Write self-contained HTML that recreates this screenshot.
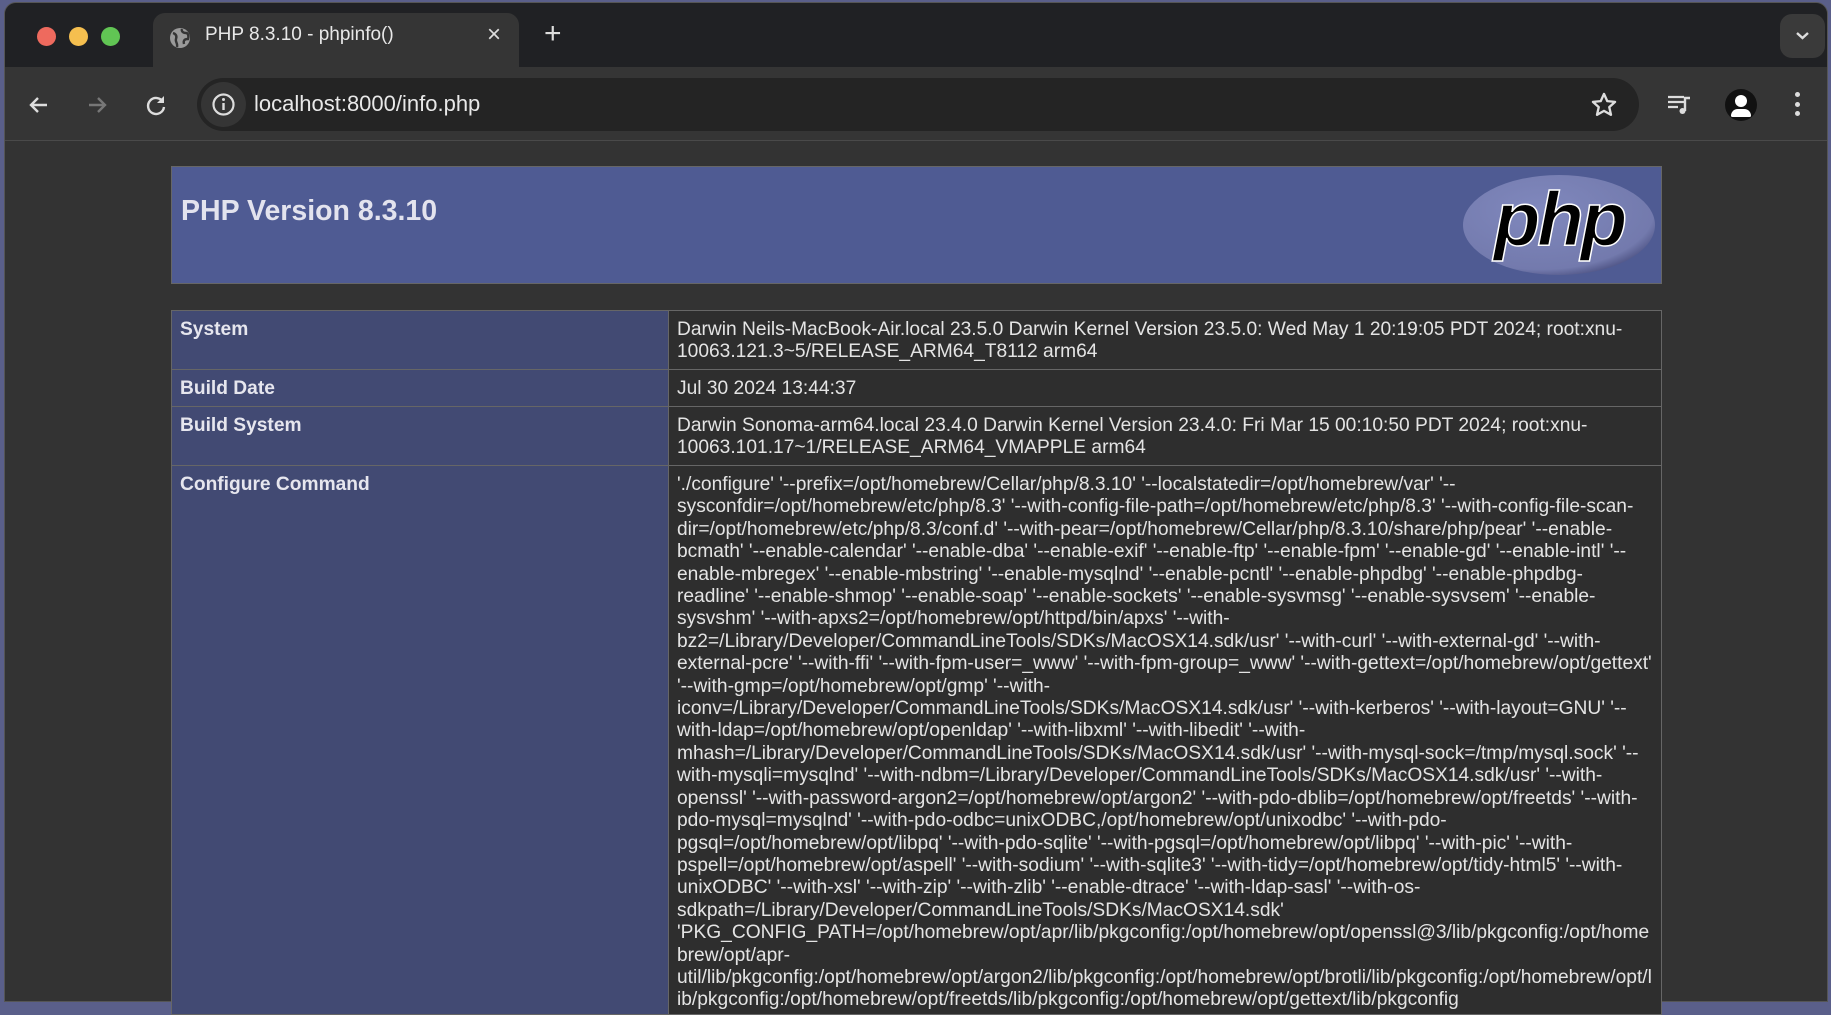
<!DOCTYPE html>
<html><head><meta charset="utf-8"><style>
*{margin:0;padding:0;box-sizing:border-box}
html,body{width:1831px;height:991px;overflow:hidden;background:#5a5f8a;font-family:"Liberation Sans",Arial,sans-serif}
.win{position:absolute;left:4px;top:2px;width:1824px;height:1000px;background:#333;border-radius:12px 12px 0 0;overflow:hidden;border:1px solid #555}
.tabbar{position:absolute;left:0;top:0;width:100%;height:64px;background:#202124}
.dot{position:absolute;top:24px;width:19px;height:19px;border-radius:50%}
.tab{position:absolute;left:148px;top:10px;width:366px;height:56px;background:#353535;border-radius:12px 12px 0 0}
.tab .t{position:absolute;left:52px;top:11px;color:#e8e8e8;font-size:19px}
.toolbar{position:absolute;left:0;top:64px;width:100%;height:74px;background:#353535;border-bottom:1px solid #4a4a4a}
.addr{position:absolute;left:192px;top:11px;width:1442px;height:53px;background:#242424;border-radius:27px}
.addr .u{position:absolute;left:57px;top:13px;color:#e8e8e8;font-size:22px}
.hdr{position:absolute;left:171px;top:166px;width:1491px;height:118px;background:#4f5b93;border:1px solid #666}
.hdr h1{position:absolute;left:9px;top:28px;color:#e3e3ee;font-size:28.5px;font-weight:bold}
table{position:absolute;left:171px;top:310px;width:1491px;border-collapse:collapse}
td{border:1px solid #666;vertical-align:top;padding:8px 8px 2px 8px;font-size:19.2px;line-height:22.4px}
td.e{width:497px;background:#424a73;color:#e6e6ee;font-weight:bold}
td.v{background:#2e2e2e;color:#e4e4e4;white-space:nowrap}
</style></head><body>
<div class="win">
<div class="tabbar">
<div class="dot" style="left:32px;background:#ee6a5e"></div>
<div class="dot" style="left:64px;background:#f5bf4f"></div>
<div class="dot" style="left:96px;background:#61c554"></div>
<div class="tab">
<svg style="position:absolute;left:15px;top:13px" width="24" height="24" viewBox="0 0 24 24"><circle cx="12" cy="12" r="10" fill="#9a9a9a"/><path d="M5 7c3 1 4 3 3 6s2 4 1 8M14 3c-1 3 2 4 4 4s3 3 2 6c-3 0-5 1-4 5" stroke="#353535" stroke-width="2.4" fill="none"/></svg>
<div class="t">PHP 8.3.10 - phpinfo()</div>
<div style="position:absolute;left:334px;top:8px;color:#ddd;font-size:24px">×</div>
</div>
<div style="position:absolute;left:539px;top:14px;color:#ddd;font-size:30px;font-weight:300">+</div>
<div style="position:absolute;left:1775px;top:11px;width:45px;height:44px;background:#3a3a3a;border-radius:12px"><svg width="45" height="44"><path d="M17 19l5.5 5 5.5-5" stroke="#ddd" stroke-width="2.4" fill="none"/></svg></div>
</div>
<div class="toolbar">
<svg style="position:absolute;left:20px;top:24px" width="28" height="28" viewBox="0 0 28 28"><path d="M22 14H6M13 7l-7 7 7 7" stroke="#ddd" stroke-width="2.4" fill="none"/></svg>
<svg style="position:absolute;left:78px;top:24px" width="28" height="28" viewBox="0 0 28 28"><path d="M6 14h16M15 7l7 7-7 7" stroke="#777" stroke-width="2.4" fill="none"/></svg>
<svg style="position:absolute;left:137px;top:24px" width="28" height="28" viewBox="0 0 28 28"><path d="M21 11a8 8 0 1 0 1 5" stroke="#ddd" stroke-width="2.4" fill="none"/><path d="M22 5v7h-7z" fill="#ddd"/></svg>
<div class="addr">
<div style="position:absolute;left:4px;top:4px;width:45px;height:45px;border-radius:50%;background:#353535"></div>
<svg style="position:absolute;left:13px;top:13px" width="27" height="27" viewBox="0 0 27 27"><circle cx="13.5" cy="13.5" r="10" stroke="#ddd" stroke-width="2.2" fill="none"/><path d="M13.5 12v7" stroke="#ddd" stroke-width="2.4"/><circle cx="13.5" cy="8.5" r="1.5" fill="#ddd"/></svg>
<div class="u">localhost:8000/info.php</div>
<svg style="position:absolute;left:1393px;top:13px" width="28" height="28" viewBox="0 0 24 24"><path d="M12 2.5l2.8 6.2 6.7.6-5 4.5 1.5 6.6L12 17l-6 3.4 1.5-6.6-5-4.5 6.7-.6z" stroke="#ddd" stroke-width="2" fill="none" stroke-linejoin="round"/></svg>
</div>
<svg style="position:absolute;left:1660px;top:24px" width="28" height="28" viewBox="0 0 28 28"><path d="M3 6h16M3 11h16M3 16h10" stroke="#ddd" stroke-width="2.2"/><path d="M20 20V7h5" stroke="#ddd" stroke-width="2.4" fill="none"/><circle cx="17.5" cy="20" r="3" fill="#ddd"/></svg>
<div style="position:absolute;left:1720px;top:22px;width:32px;height:32px;border-radius:50%;background:#111;overflow:hidden"><div style="position:absolute;left:10px;top:6px;width:12px;height:12px;border-radius:50%;background:#fff"></div><div style="position:absolute;left:6px;top:20px;width:20px;height:8px;border-radius:10px 10px 2px 2px;background:#fff"></div></div>
<div style="position:absolute;left:1790px;top:25px;width:5px;height:24px">
<div style="width:5px;height:5px;border-radius:50%;background:#ddd;margin-bottom:4.5px"></div><div style="width:5px;height:5px;border-radius:50%;background:#ddd;margin-bottom:4.5px"></div><div style="width:5px;height:5px;border-radius:50%;background:#ddd"></div></div>
</div>
</div>
<div class="hdr"><h1>PHP Version 8.3.10</h1>
<svg style="position:absolute;left:1287px;top:6px" width="200" height="104" viewBox="0 0 200 104"><defs><radialGradient id="g" cx="0.4" cy="0.35" r="0.7"><stop offset="0" stop-color="#8088bd"/><stop offset="0.85" stop-color="#737aad"/><stop offset="1" stop-color="#4c5182"/></radialGradient></defs>
<ellipse cx="100" cy="52" rx="96" ry="50" fill="url(#g)"/>
<text x="100" y="72" text-anchor="middle" font-family="Liberation Sans,Arial,sans-serif" font-weight="bold" font-style="italic" font-size="76" fill="#000" stroke="#fff" stroke-width="1.5" letter-spacing="-3">php</text></svg>
</div>
<table>
<tr><td class="e" style="height:59px">System</td><td class="v">Darwin Neils-MacBook-Air.local 23.5.0 Darwin Kernel Version 23.5.0: Wed May 1 20:19:05 PDT 2024; root:xnu-<br>10063.121.3~5/RELEASE_ARM64_T8112 arm64</td></tr>
<tr><td class="e" style="height:37px">Build Date</td><td class="v">Jul 30 2024 13:44:37</td></tr>
<tr><td class="e" style="height:59px">Build System</td><td class="v">Darwin Sonoma-arm64.local 23.4.0 Darwin Kernel Version 23.4.0: Fri Mar 15 00:10:50 PDT 2024; root:xnu-<br>10063.101.17~1/RELEASE_ARM64_VMAPPLE arm64</td></tr>
<tr><td class="e">Configure Command</td><td class="v">'./configure' '--prefix=/opt/homebrew/Cellar/php/8.3.10' '--localstatedir=/opt/homebrew/var' '--<br>sysconfdir=/opt/homebrew/etc/php/8.3' '--with-config-file-path=/opt/homebrew/etc/php/8.3' '--with-config-file-scan-<br>dir=/opt/homebrew/etc/php/8.3/conf.d' '--with-pear=/opt/homebrew/Cellar/php/8.3.10/share/php/pear' '--enable-<br>bcmath' '--enable-calendar' '--enable-dba' '--enable-exif' '--enable-ftp' '--enable-fpm' '--enable-gd' '--enable-intl' '--<br>enable-mbregex' '--enable-mbstring' '--enable-mysqlnd' '--enable-pcntl' '--enable-phpdbg' '--enable-phpdbg-<br>readline' '--enable-shmop' '--enable-soap' '--enable-sockets' '--enable-sysvmsg' '--enable-sysvsem' '--enable-<br>sysvshm' '--with-apxs2=/opt/homebrew/opt/httpd/bin/apxs' '--with-<br>bz2=/Library/Developer/CommandLineTools/SDKs/MacOSX14.sdk/usr' '--with-curl' '--with-external-gd' '--with-<br>external-pcre' '--with-ffi' '--with-fpm-user=_www' '--with-fpm-group=_www' '--with-gettext=/opt/homebrew/opt/gettext'<br>'--with-gmp=/opt/homebrew/opt/gmp' '--with-<br>iconv=/Library/Developer/CommandLineTools/SDKs/MacOSX14.sdk/usr' '--with-kerberos' '--with-layout=GNU' '--<br>with-ldap=/opt/homebrew/opt/openldap' '--with-libxml' '--with-libedit' '--with-<br>mhash=/Library/Developer/CommandLineTools/SDKs/MacOSX14.sdk/usr' '--with-mysql-sock=/tmp/mysql.sock' '--<br>with-mysqli=mysqlnd' '--with-ndbm=/Library/Developer/CommandLineTools/SDKs/MacOSX14.sdk/usr' '--with-<br>openssl' '--with-password-argon2=/opt/homebrew/opt/argon2' '--with-pdo-dblib=/opt/homebrew/opt/freetds' '--with-<br>pdo-mysql=mysqlnd' '--with-pdo-odbc=unixODBC,/opt/homebrew/opt/unixodbc' '--with-pdo-<br>pgsql=/opt/homebrew/opt/libpq' '--with-pdo-sqlite' '--with-pgsql=/opt/homebrew/opt/libpq' '--with-pic' '--with-<br>pspell=/opt/homebrew/opt/aspell' '--with-sodium' '--with-sqlite3' '--with-tidy=/opt/homebrew/opt/tidy-html5' '--with-<br>unixODBC' '--with-xsl' '--with-zip' '--with-zlib' '--enable-dtrace' '--with-ldap-sasl' '--with-os-<br>sdkpath=/Library/Developer/CommandLineTools/SDKs/MacOSX14.sdk'<br>'PKG_CONFIG_PATH=/opt/homebrew/opt/apr/lib/pkgconfig:/opt/homebrew/opt/openssl@3/lib/pkgconfig:/opt/home<br>brew/opt/apr-<br>util/lib/pkgconfig:/opt/homebrew/opt/argon2/lib/pkgconfig:/opt/homebrew/opt/brotli/lib/pkgconfig:/opt/homebrew/opt/l<br>ib/pkgconfig:/opt/homebrew/opt/freetds/lib/pkgconfig:/opt/homebrew/opt/gettext/lib/pkgconfig</td></tr>
</table>
</body></html>
